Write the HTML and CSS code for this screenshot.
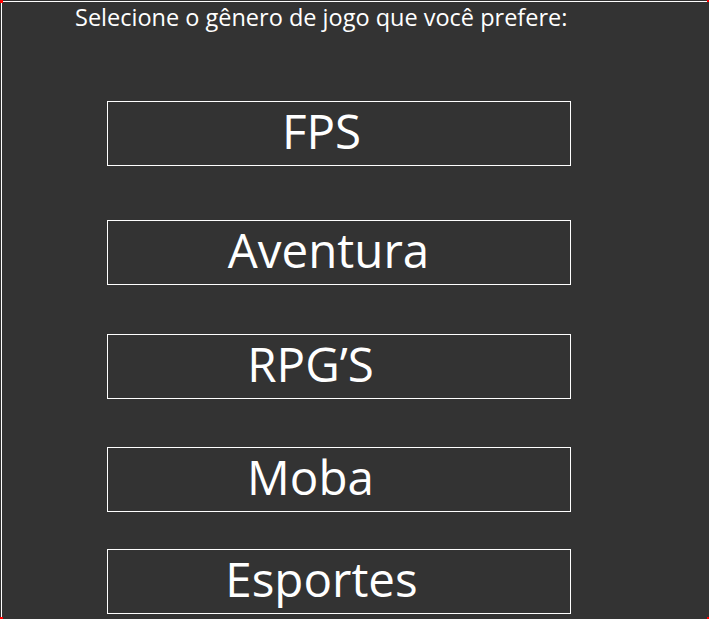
FILE: index.html
```html
<!DOCTYPE html>
<html lang="pt-BR">
<head>
<meta charset="utf-8">
<title>Gênero de jogo</title>
<link rel="stylesheet" href="styles.css">
</head>
<body>
<div class="corner corner-tl"></div>
<div class="corner corner-tr"></div>
<div class="corner corner-bl"></div>
<div class="corner corner-br"></div>
<main class="frame">
  <p class="title">Selecione o gênero de jogo que você prefere:</p>
  <ul class="options">
    <li class="option opt-fps">FPS</li>
    <li class="option opt-aventura">Aventura</li>
    <li class="option opt-rpg">RPG’S</li>
    <li class="option opt-moba">Moba</li>
    <li class="option opt-esportes">Esportes</li>
  </ul>
</main>
</body>
</html>
```
FILE: styles.css
```css
html, body {
  margin: 0;
  padding: 0;
  height: 100%;
  background: #333333;
  overflow: hidden;
}
body {
  font-family: "Open Sans", "Noto Sans", sans-serif;
  color: #ffffff;
  position: relative;
}
.frame {
  margin: 1px 0 0 1px;
  border-top: 1px solid #ffffff;
  border-left: 1px solid #ffffff;
  height: calc(100% - 2px);
  box-sizing: border-box;
}
.title {
  margin: 0;
  padding: 1px 0 0 73px;
  font-size: 23.5px;
  line-height: 28px;
  height: 29px;
  box-sizing: border-box;
  white-space: nowrap;
}
.options {
  list-style: none;
  margin: 0;
  padding: 0 0 0 105px;
}
.option {
  box-sizing: border-box;
  width: 464px;
  height: 65px;
  border: 1px solid #ffffff;
  font-size: 47.5px;
  line-height: 57px;
  text-align: center;
  white-space: nowrap;
}
.opt-fps { margin-top: 70px; padding-right: 35px; }
.opt-aventura { margin-top: 54px; padding-right: 21px; }
.opt-rpg { margin-top: 49px; padding-right: 57px; }
.opt-moba { margin-top: 48px; padding-right: 57px; }
.opt-esportes { margin-top: 37px; padding-right: 35px; }
.corner {
  position: absolute;
  width: 2px;
  height: 2px;
  background: #ff0000;
  z-index: 2;
}
.corner-tl { left: 0; top: 0; width: 3px; height: 3px; }
.corner-tr { right: 0; top: 0; }
.corner-bl { left: 0; bottom: 0; width: 3px; }
.corner-br { right: 0; bottom: 0; }
```
